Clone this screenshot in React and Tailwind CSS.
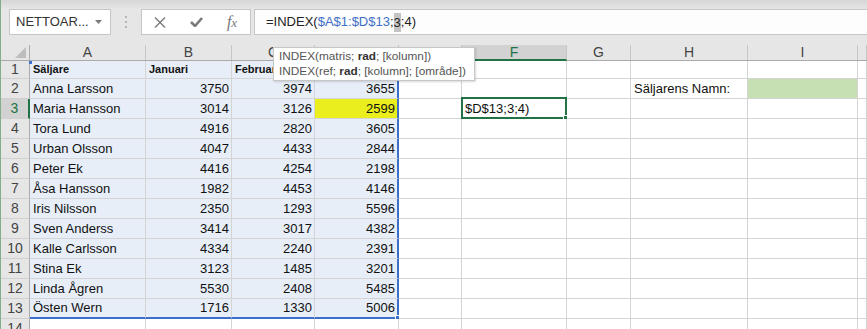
import React from "react";

const data = [
  ["Säljare", "Januari", "Februari", "Mars"],
  ["Anna Larsson", 3750, 3974, 3655],
  ["Maria Hansson", 3014, 3126, 2599],
  ["Tora Lund", 4916, 2820, 3605],
  ["Urban Olsson", 4047, 4433, 2844],
  ["Peter Ek", 4416, 4254, 2198],
  ["Åsa Hansson", 1982, 4453, 4146],
  ["Iris Nilsson", 2350, 1293, 5596],
  ["Sven Anderss", 3414, 3017, 4382],
  ["Kalle Carlsson", 4334, 2240, 2391],
  ["Stina Ek", 3123, 1485, 3201],
  ["Linda Ågren", 5530, 2408, 5485],
  ["Östen Wern", 1716, 1330, 5006],
];

const colW = [
  "w-[116px]",
  "w-[86px]",
  "w-[83px]",
  "w-[84px]",
  "w-[63px]",
  "w-[105px]",
  "w-[64px]",
  "w-[117px]",
  "w-[110px]",
  "w-[9px]",
];
const letters = ["A", "B", "C", "D", "E", "F", "G", "H", "I", ""];

function Toolbar() {
  return (
    <div className="flex flex-col h-[45px] bg-[#e6e6e6]">
      <div className="h-[9px] bg-gradient-to-b from-[#d6d6d6] to-[#e6e6e6]" />
      <div className="flex h-[26px]">
        {/* name box */}
        <div className="ml-[8px] w-[102px] flex items-center justify-between bg-white border border-[#c6c6c6] pl-[6px] pr-[8px]">
          <span className="text-[13px] text-[#333]">NETTOAR...</span>
          <svg width="7" height="4" viewBox="0 0 7 4">
            <path d="M0 0h7L3.5 4z" fill="#7a7a7a" />
          </svg>
        </div>
        <div className="w-[30px] flex flex-col items-center justify-center gap-[3px]">
          <span className="w-[2px] h-[2px] bg-[#b4b4b4]" />
          <span className="w-[2px] h-[2px] bg-[#b4b4b4]" />
          <span className="w-[2px] h-[2px] bg-[#b4b4b4]" />
        </div>
        {/* cancel / enter / fx */}
        <div className="w-[110px] flex items-center bg-white border border-[#c6c6c6] text-[#787878]">
          <div className="w-[36px] flex justify-center">
            <svg width="12" height="11" viewBox="0 0 12 11">
              <path d="M1 0.5l10 10M11 0.5l-10 10" stroke="#7a7a7a" strokeWidth="1.4" />
            </svg>
          </div>
          <div className="w-[36px] flex justify-center">
            <svg width="13" height="10" viewBox="0 0 13 10">
              <path d="M1 5l4 4l7-8" stroke="#7a7a7a" strokeWidth="2.6" fill="none" />
            </svg>
          </div>
          <div className="w-[36px] flex items-baseline justify-center font-['Liberation_Serif',serif] italic text-[16px] leading-none">
            <span>f</span>
            <span className="text-[13px]">x</span>
          </div>
        </div>
        {/* formula */}
        <div className="ml-[3px] flex-1 flex items-center bg-[#fdfdfd] border-y border-l border-[#c6c6c6] pl-[11px] text-[13px] text-[#222]">
          <span>=INDEX(</span>
          <span className="text-[#3f6fc6]">$A$1:$D$13</span>
          <span>;</span>
          <span className="bg-[#c4c4c4] leading-[19px]">3</span>
          <span>;4)</span>
        </div>
      </div>
      <div className="h-[10px]" />
    </div>
  );
}

function HeaderRow() {
  return (
    <div className="flex h-[16px] bg-[#e6e6e6] border-b border-[#ababab]">
      <div className="w-[29px] shrink-0 flex items-end justify-end pr-[3px] pb-[2px] border-r border-[#ababab]">
        <svg width="11" height="11" viewBox="0 0 11 11">
          <path d="M11 0v11H0z" fill="#bdbdbd" />
        </svg>
      </div>
      {letters.map((l, i) =>
        l === "F" ? (
          <div
            key={i}
            className={`${colW[i]} shrink-0 flex items-center justify-center bg-[#d2d2d2] text-[#217346] text-[14px] border-r border-[#c6c6c6] border-b-2 border-b-[#217346] -mb-[1px]`}
          >
            {l}
          </div>
        ) : (
          <div
            key={i}
            className={`${colW[i]} shrink-0 flex items-center justify-center text-[#444] text-[14px] border-r border-[#c6c6c6]`}
          >
            {l}
          </div>
        )
      )}
    </div>
  );
}

function Cell({ r, c }) {
  const inRange = r <= 13 && c <= 3;
  let bg = inRange ? "bg-[#e7eef8]" : "bg-white";
  if (r === 3 && c === 3) bg = "bg-[#eaee1c]";
  if (r === 2 && c === 8) bg = "bg-[#c6e0b4]";
  const right =
    inRange && c === 3
      ? "border-r-2 border-r-[#3c6fc9]"
      : "border-r border-r-[#d4d4d4]";
  const bottom =
    r === 13 && c <= 3
      ? "border-b-2 border-b-[#3c6fc9]"
      : "border-b border-b-[#d4d4d4]";

  let content = null;
  let align = "justify-start pl-[3px]";
  if (inRange) {
    const v = data[r - 1][c];
    if (r === 1) {
      content = <span className="font-bold text-[11px]">{v}</span>;
    } else if (typeof v === "number") {
      align = "justify-end pr-[2px]";
      content = v;
    } else {
      content = v;
    }
  }
  if (r === 2 && c === 7) content = "Säljarens Namn:";
  if (r === 3 && c === 5) content = "$D$13;3;4)";

  return (
    <div
      className={`${colW[c]} shrink-0 h-full relative flex items-center whitespace-nowrap overflow-visible text-[13px] text-[#111] ${bg} ${right} ${bottom} ${align}`}
    >
      {content}
      {r === 1 && c === 0 && (
        <span className="absolute -left-[1px] top-0 w-[3px] h-[3px] bg-[#3c6fc9]" />
      )}
      {r === 13 && c === 3 && (
        <span className="absolute -right-[4px] -bottom-[4px] w-[6px] h-[6px] bg-[#3c6fc9] border border-white" />
      )}
      {r === 3 && c === 5 && (
        <span className="absolute -left-[1px] -top-[2px] w-[106px] h-[22px] border-2 border-[#217346]">
          <span className="absolute -right-[4px] -bottom-[4px] w-[6px] h-[6px] bg-[#217346] border border-white" />
        </span>
      )}
    </div>
  );
}

function Row({ r }) {
  const sel = r === 3;
  return (
    <div className={`flex ${r === 1 ? "h-[18px]" : "h-[20px]"}`}>
      <div
        className={`w-[29px] shrink-0 flex items-center justify-center text-[14px] border-b border-b-[#d0d0d0] ${
          sel
            ? "bg-[#d2d2d2] text-[#217346] border-r-2 border-r-[#217346]"
            : "bg-[#e6e6e6] text-[#444] border-r border-r-[#ababab]"
        }`}
      >
        {r}
      </div>
      {colW.map((_, c) => (
        <Cell key={c} r={r} c={c} />
      ))}
    </div>
  );
}

export default function App() {
  const rows = Array.from({ length: 14 }, (_, i) => i + 1);
  return (
    <div className="relative w-[867px] h-[329px] overflow-hidden bg-white border-l border-[#7fb08c] font-['Liberation_Sans',Arial,sans-serif]">
      <Toolbar />
      <HeaderRow />
      {rows.map((r) => (
        <Row key={r} r={r} />
      ))}

      {/* function tooltip */}
      <div className="absolute left-[272px] top-[47px] w-[202px] h-[34px] bg-white border border-[#c6c6c6] shadow-[1px_1px_2px_rgba(0,0,0,0.15)] px-[5px] pt-[1px] text-[11.8px] leading-[15px] text-[#555] whitespace-nowrap">
        <div>
          INDEX(matris; <b className="text-[#333]">rad</b>; [kolumn])
        </div>
        <div>
          INDEX(ref; <b className="text-[#333]">rad</b>; [kolumn]; [område])
        </div>
      </div>
    </div>
  );
}
